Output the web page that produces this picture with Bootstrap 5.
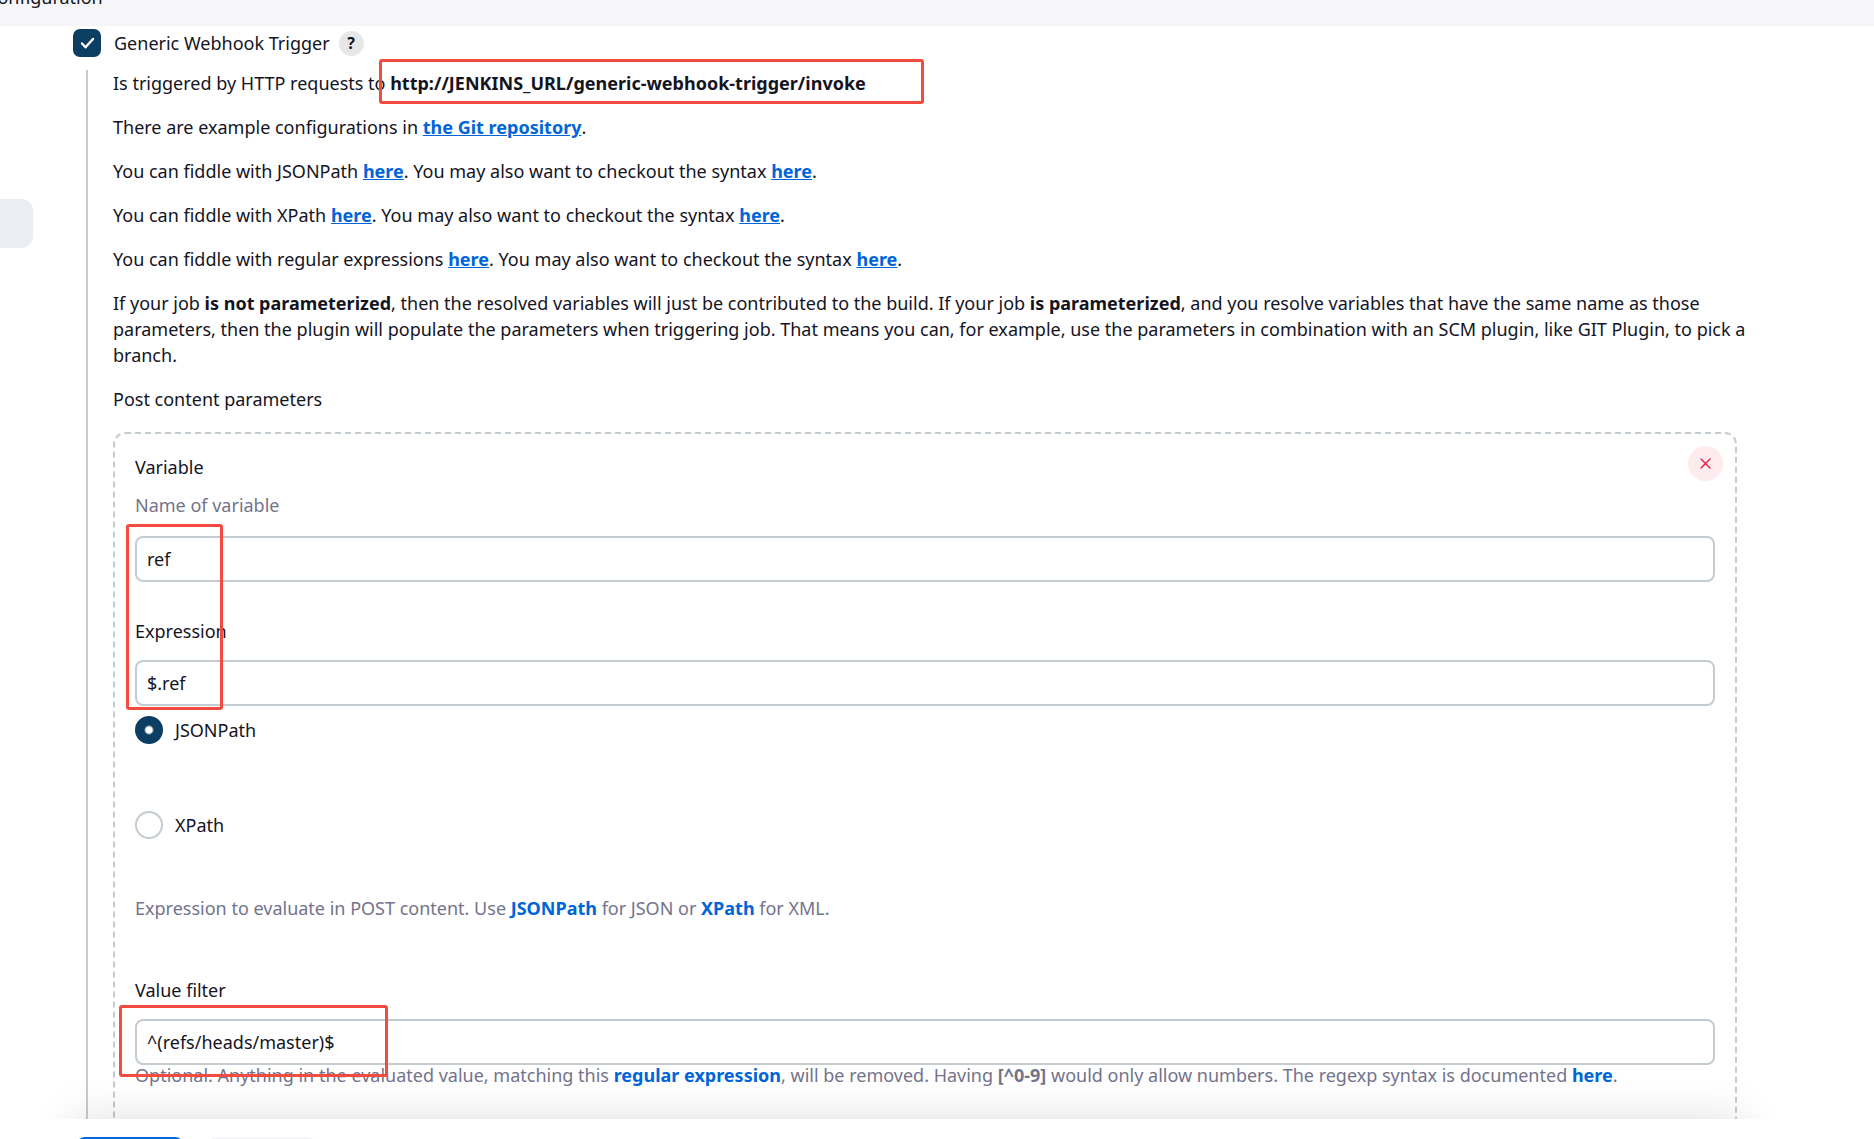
<!DOCTYPE html>
<html lang="en">
<head>
<meta charset="utf-8">
<meta name="viewport" content="width=device-width, initial-scale=1">
<title>Configuration</title>
<link href="https://cdn.jsdelivr.net/npm/bootstrap@5.3.0/dist/css/bootstrap.min.css" rel="stylesheet">
<style>
  :root { --ink: #14141f; --soft: #73738c; --line: #c3ccd1; --navy: #0b3e61; --link: #0065d8; --note: #f44b3f; }
  body { font: 18px/26px "Noto Sans", "Open Sans", sans-serif; color: var(--ink); }
  p { margin-bottom: 18px; }
  a { color: var(--link); font-weight: 700; }
  .crumbs { height: 26px; background: #f6f6f9; }
  .crumbs a { color: var(--ink); font-weight: 400; margin: -16px 0 0 -14px; }
  .side { width: 33px; padding-top: 173px; }
  .side-item { height: 49px; background: #ececf3; border-radius: 0 12px 12px 0; }
  .config { padding: 4px 137px 0 40px; }
  .trigger-row { height: 26px; }
  .trigger-row label { margin: 0 9px 0 13px; }
  .form-check-input.tick { width: 28px; height: 28px; margin: 0; border: 2px solid var(--line); flex-shrink: 0; }
  .form-check-input.tick[type=checkbox] { border-radius: 7px; }
  .form-check-input.tick:checked { background-color: var(--navy); border-color: var(--navy); }
  .tick[type=checkbox]:checked { background-image: url("data:image/svg+xml,%3csvg xmlns='http://www.w3.org/2000/svg' viewBox='0 0 24 24'%3e%3cpath fill='none' stroke='%23fff' stroke-width='2.4' stroke-linecap='round' stroke-linejoin='round' d='M7 12.5l3.5 3.8 7.5-8.3'/%3e%3c/svg%3e"); }
  .tick[type=radio]:checked { background-image: radial-gradient(circle, #fff 3px, transparent 5px); background-size: 100%; }
  .help { width: 25px; height: 25px; background: #e7e7e7; color: var(--ink); font-size: 16px; line-height: 25px; }
  .trigger-body { margin: 14px 0 0 13px; padding-left: 25px; border-left: 2px solid var(--line); }
  .about { margin-right: -16px; }
  .param { border: 2px dashed var(--line); border-radius: 12px; padding: 20px 20px 80px; margin-top: 20px; }
  .remove { width: 35px; height: 35px; top: 12px; right: 12px; background: #fdebed; color: #e6173d; }
  .field { height: 46px; border: 2px solid var(--line); border-radius: 8px; padding: 0 10px; font-size: 18px; color: var(--ink); }
  .hint { color: var(--soft); }
  .hint a { text-decoration: none; }
  .hint-name { margin: 12px 0 18px; }
  .field-gap { margin-bottom: 36px; }
  .radio-first { margin: 10px 0 67px; }
  .block-gap { margin-bottom: 56px; }
  .hint-tight { line-height: 20px; }
  .marker { border: 3px solid var(--note); border-radius: 3px; pointer-events: none; }
  .marker-url { inset: -12px -58px -9px -11px; }
  .marker-expr { width: 97px; height: 186px; left: -9px; top: -12px; }
  .marker-filter { width: 269px; height: 72px; left: -16px; top: -14px; }
  .bar-shadow { top: 100%; left: 72px; right: 130px; height: 60px; box-shadow: 0 0 44px rgba(0, 0, 0, .13); }
  .actions { height: 20px; padding: 18px 76px 0; gap: 24px; }
  .actions .btn { width: 108px; height: 40px; border-radius: 9px; border: 0; }
  .save { background: var(--link); }
  .apply { background: #f4f4f9; }
</style>
<script src="https://cdn.jsdelivr.net/npm/bootstrap@5.3.0/dist/js/bootstrap.bundle.min.js"></script>
</head>
<body class="d-flex flex-column vh-100 overflow-hidden bg-white">
<header class="crumbs d-flex align-items-start overflow-hidden flex-shrink-0"><a href="#" class="text-decoration-none">Configuration</a></header>

<main class="d-flex flex-grow-1 overflow-hidden position-relative">
  <aside class="side flex-shrink-0"><div class="side-item"></div></aside>
  <section class="config flex-grow-1">
    <div class="trigger-row d-flex align-items-center">
      <input class="form-check-input tick" type="checkbox" id="webhook" checked>
      <label for="webhook">Generic Webhook Trigger</label>
      <button type="button" class="help btn p-0 border-0 rounded-circle fw-bold" aria-label="Help">?</button>
    </div>

    <div class="trigger-body">
      <p>Is triggered by HTTP requests to <span class="position-relative"><b>http://JENKINS_URL/generic-webhook-trigger/invoke</b><span class="marker marker-url position-absolute"></span></span></p>
      <p>There are example configurations in <a href="#">the Git repository</a>.</p>
      <p>You can fiddle with JSONPath <a href="#">here</a>. You may also want to checkout the syntax <a href="#">here</a>.</p>
      <p>You can fiddle with XPath <a href="#">here</a>. You may also want to checkout the syntax <a href="#">here</a>.</p>
      <p>You can fiddle with regular expressions <a href="#">here</a>. You may also want to checkout the syntax <a href="#">here</a>.</p>
      <p class="about">If your job <b>is not parameterized</b>, then the resolved variables will just be contributed to the build. If your job <b>is parameterized</b>, and you resolve variables that have the same name as those parameters, then the plugin will populate the parameters when triggering job. That means you can, for example, use the parameters in combination with an SCM plugin, like GIT Plugin, to pick a branch.</p>
      <div>Post content parameters</div>

      <div class="param position-relative">
        <button type="button" class="remove btn p-0 border-0 rounded-circle position-absolute d-flex align-items-center justify-content-center" aria-label="Remove">
          <svg width="11" height="11" viewBox="0 0 11 11" fill="none" stroke="currentColor" stroke-width="1.3" stroke-linecap="round"><path d="M1 1l9 9M10 1l-9 9"/></svg>
        </button>
        <label for="variable" class="d-block">Variable</label>
        <div class="hint hint-name">Name of variable</div>
        <div class="position-relative field-gap">
          <input type="text" id="variable" class="field form-control" value="ref">
          <span class="marker marker-expr position-absolute"></span>
        </div>
        <label for="expression" class="d-block mb-3">Expression</label>
        <input type="text" id="expression" class="field form-control" value="$.ref">
        <div class="d-flex align-items-center radio-first">
          <input class="form-check-input tick" type="radio" name="kind" id="jsonpath" checked>
          <label for="jsonpath" class="ms-2 ps-1">JSONPath</label>
        </div>
        <div class="d-flex align-items-center block-gap">
          <input class="form-check-input tick" type="radio" name="kind" id="xpath">
          <label for="xpath" class="ms-2 ps-1">XPath</label>
        </div>
        <div class="hint block-gap">Expression to evaluate in POST content. Use <a href="#">JSONPath</a> for JSON or <a href="#">XPath</a> for XML.</div>
        <label for="filter" class="d-block mb-3">Value filter</label>
        <div class="position-relative">
          <input type="text" id="filter" class="field form-control" value="^(refs/heads/master)$">
          <span class="marker marker-filter position-absolute"></span>
        </div>
        <div class="hint hint-tight">Optional. Anything in the evaluated value, matching this <a href="#">regular expression</a>, will be removed. Having <b>[^0-9]</b> would only allow numbers. The regexp syntax is documented <a href="#">here</a>.</div>
      </div>
    </div>
  </section>
  <div class="bar-shadow position-absolute"></div>
</main>

<footer class="actions d-flex flex-shrink-0 overflow-hidden">
  <button type="button" class="btn save flex-shrink-0" aria-label="Save"></button>
  <button type="button" class="btn apply flex-shrink-0" aria-label="Apply"></button>
</footer>
</body>
</html>
